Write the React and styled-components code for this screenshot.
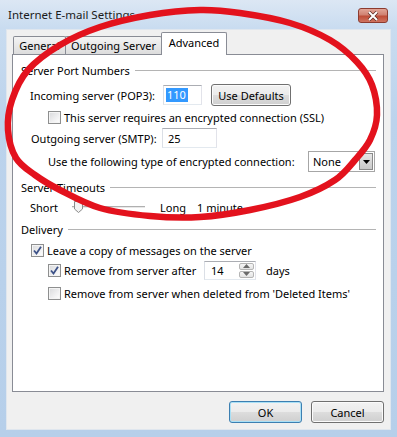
import React from "react";
import styled, { createGlobalStyle, css } from "styled-components";

const Global = createGlobalStyle`
  html, body { margin: 0; padding: 0; background: #b9d1ea; }
  body { font-family: "Noto Sans", "Open Sans", sans-serif; font-size: 11px; color: #000; }
`;

const Window = styled.div`
  position: relative;
  width: 397px;
  height: 437px;
  box-sizing: border-box;
  display: flex;
  flex-direction: column;
  padding: 0 6px 7px 6px;
  background: linear-gradient(to bottom, #dce7f4 0, #c9dcf0 28px, #bcd3ec 120px, #b6cfea 100%);
  overflow: hidden;
`;

const TitleBar = styled.div`
  height: 29px;
  display: flex;
  align-items: center;
  padding-left: 2px;
  font-size: 11.5px;
  color: #1a1a1a;
`;

const Close = styled.div`
  margin-left: auto;
  margin-right: 3px;
  margin-top: 2px;
  width: 30px;
  height: 15px;
  box-sizing: border-box;
  border: 1px solid #8c3b2f;
  border-radius: 3px;
  display: flex;
  align-items: center;
  justify-content: center;
  background: linear-gradient(to bottom, #e2a597 0, #d08272 45%, #bf4d38 55%, #cf7360 100%);
`;

const Client = styled.div`
  flex: 1;
  display: flex;
  flex-direction: column;
  background: #f0f0f0;
  padding: 3px 7px 7px 6px;
  box-shadow: inset 0 0 0 1px #dfe6ee;
`;

const TabStrip = styled.div`
  height: 22px;
  display: flex;
  align-items: flex-end;
  padding-left: 1px;
`;

const Tab = styled.div`
  box-sizing: border-box;
  width: ${p => p.$w}px;
  margin-left: -1px;
  border: 1px solid #898c95;
  border-bottom: none;
  border-radius: 2px 2px 0 0;
  display: flex;
  align-items: center;
  justify-content: center;
  ${p => p.$active ? css`
    height: 23px;
    margin-bottom: -1px;
    background: #fff;
    position: relative;
    z-index: 1;
    padding-bottom: 3px;
  ` : css`
    height: 18px;
    background: linear-gradient(to bottom, #f4f4f4, #e6e6e6 60%, #dcdcdc);
  `}
  &:first-child { margin-left: 0; }
`;

const Panel = styled.div`
  flex: 1;
  border: 1px solid #898c95;
  background: #fff;
  padding: 0 7px 0 8px;
  display: flex;
  flex-direction: column;
`;

const GroupHeader = styled.div`
  height: 16px;
  margin-top: ${p => p.$mt}px;
  display: flex;
  align-items: center;
  gap: 5px;
  white-space: nowrap;
  &::after {
    content: "";
    flex: 1;
    height: 1px;
    background: #b4b4b4;
  }
`;

const Row = styled.div`
  height: ${p => p.$h}px;
  margin-top: ${p => p.$mt}px;
  margin-left: ${p => p.$indent}px;
  display: flex;
  align-items: center;
  white-space: nowrap;
`;

const Label = styled.span`
  display: inline-block;
  width: ${p => (p.$w ? `${p.$w}px` : "auto")};
  margin-left: ${p => p.$ml || 0}px;
`;

const TextBox = styled.div`
  box-sizing: border-box;
  width: ${p => p.$w}px;
  height: ${p => p.$h}px;
  border: 1px solid;
  border-color: #abadb3 #e2e3ea #e3e9ef #dbdfe6;
  background: #fff;
  display: flex;
  align-items: center;
  padding-left: ${p => p.$pl}px;
  position: relative;
`;

const Selected = styled.span`
  background: #3399ff;
  color: #fff;
  padding: 0 2px 0 1px;
  line-height: 14px;
`;

const Button = styled.div`
  box-sizing: border-box;
  width: ${p => p.$w}px;
  height: ${p => p.$h || 22}px;
  margin-left: ${p => p.$ml || 0}px;
  border: 1px solid ${p => (p.$default ? "#3c7fb1" : "#707070")};
  border-radius: 3px;
  display: flex;
  align-items: center;
  justify-content: center;
  background: linear-gradient(to bottom, #f2f2f2 0, #ebebeb 50%, #dddddd 50%, #cfcfcf 100%);
  box-shadow: inset 0 0 0 1px ${p => (p.$default ? "#a9e0f6" : "#fbfbfb")};
`;

const Check = styled.span`
  box-sizing: border-box;
  width: 13px;
  height: 13px;
  flex: none;
  margin-right: 3px;
  border: 1px solid #8e8f8f;
  background: linear-gradient(135deg, #d8d9db 0, #f0f0f1 60%, #ffffff 100%);
  box-shadow: inset 0 0 0 1px #f4f4f4;
  display: flex;
  align-items: center;
  justify-content: center;
`;

const Combo = styled.div`
  margin-left: auto;
  margin-right: 1px;
  box-sizing: border-box;
  width: 67px;
  height: 21px;
  border: 1px solid #a6a6a6;
  background: #fff;
  display: flex;
  align-items: center;
  padding-left: 4px;
  justify-content: space-between;
`;

const ComboArrow = styled.div`
  box-sizing: border-box;
  width: 14px;
  height: 17px;
  margin-right: 1px;
  border: 1px solid #8a8a8a;
  background: linear-gradient(to bottom, #e6e6e6, #c9c9c9);
  display: flex;
  align-items: center;
  justify-content: center;
`;

const Spin = styled.div`
  position: absolute;
  right: 1px;
  top: 1px;
  bottom: 1px;
  width: 15px;
  display: flex;
  flex-direction: column;
  gap: 1px;
`;

const SpinBtn = styled.div`
  flex: 1;
  box-sizing: border-box;
  border: 1px solid #b5b5b5;
  border-radius: 2px;
  background: linear-gradient(to bottom, #f6f6f6, #e3e3e3);
  display: flex;
  align-items: center;
  justify-content: center;
`;

const Slider = styled.div`
  position: relative;
  width: 73px;
  height: 12px;
  &::before {
    content: "";
    position: absolute;
    left: 0;
    right: 0;
    top: 5px;
    height: 1px;
    background: #b0b0b0;
    border-bottom: 1px solid #e8e8e8;
  }
`;

const Thumb = styled.svg`
  position: absolute;
  left: 2px;
  top: 0;
`;

const Footer = styled.div`
  display: flex;
  justify-content: flex-end;
  gap: 9px;
  padding-top: 9px;
`;

const Overlay = styled.svg`
  position: absolute;
  left: 0;
  top: 0;
  pointer-events: none;
`;

const ring = [
  [200, 10], [240, 13], [290, 23], [330, 40], [357, 62], [372, 85], [377, 115],
  [370, 140], [355, 160], [335, 180], [300, 197], [250, 210], [200, 217],
  [150, 216], [100, 208], [60, 190], [35, 175], [16, 158], [8, 130], [12, 100],
  [28, 70], [60, 45], [100, 27], [150, 15],
];

const smoothPath = pts => {
  const n = pts.length;
  let d = `M${pts[0][0]},${pts[0][1]}`;
  for (let i = 0; i < n; i++) {
    const p0 = pts[(i - 1 + n) % n], p1 = pts[i], p2 = pts[(i + 1) % n], p3 = pts[(i + 2) % n];
    const c1 = [p1[0] + (p2[0] - p0[0]) / 6, p1[1] + (p2[1] - p0[1]) / 6];
    const c2 = [p2[0] - (p3[0] - p1[0]) / 6, p2[1] - (p3[1] - p1[1]) / 6];
    d += ` C${c1[0]},${c1[1]} ${c2[0]},${c2[1]} ${p2[0]},${p2[1]}`;
  }
  return d + "Z";
};

const Tick = () => (
  <svg width="9" height="9" viewBox="0 0 9 9">
    <path d="M1 4.5 L3.5 7.5 L8 0.8" fill="none" stroke="#3d5288" strokeWidth="1.8" />
  </svg>
);

const CheckBox = ({ checked }) => <Check>{checked && <Tick />}</Check>;

const App = () => (
  <Window>
    <Global />
    <TitleBar>
      Internet E-mail Settings
      <Close>
        <svg width="12" height="10" viewBox="0 0 12 10">
          <path d="M2 1 L10 9 M10 1 L2 9" stroke="#5a2a22" strokeWidth="3.4" />
          <path d="M2 1 L10 9 M10 1 L2 9" stroke="#fff" strokeWidth="2" />
        </svg>
      </Close>
    </TitleBar>
    <Client>
      <TabStrip>
        <Tab $w={53}>General</Tab>
        <Tab $w={97}>Outgoing Server</Tab>
        <Tab $w={66} $active>Advanced</Tab>
      </TabStrip>
      <Panel>
        <GroupHeader $mt={7}>Server Port Numbers</GroupHeader>
        <Row $h={22} $mt={6} $indent={9}>
          <Label $w={133}>Incoming server (POP3):</Label>
          <TextBox $w={39} $h={20} $pl={2}><Selected>110</Selected></TextBox>
          <Button $w={80} $ml={9}>Use Defaults</Button>
        </Row>
        <Row $h={16} $mt={3} $indent={27}>
          <CheckBox />
          This server requires an encrypted connection (SSL)
        </Row>
        <Row $h={20} $mt={3} $indent={10}>
          <Label $w={131}>Outgoing server (SMTP):</Label>
          <TextBox $w={55} $h={20} $pl={5}>25</TextBox>
        </Row>
        <Row $h={21} $mt={3} $indent={27}>
          <Label>Use the following type of encrypted connection:</Label>
          <Combo>
            None
            <ComboArrow>
              <svg width="7" height="4" viewBox="0 0 7 4"><path d="M0 0 H7 L3.5 4Z" fill="#000" /></svg>
            </ComboArrow>
          </Combo>
        </Row>
        <GroupHeader $mt={7}>Server Timeouts</GroupHeader>
        <Row $h={20} $mt={2} $indent={9}>
          <Label $w={42}>Short</Label>
          <Slider>
            <Thumb width="9" height="12" viewBox="0 0 9 12">
              <path d="M0.5 0.5 H8.5 V8 L4.5 11.5 L0.5 8Z" fill="#f2f2f2" stroke="#8a8a8a" />
            </Thumb>
          </Slider>
          <Label $ml={15}>Long</Label>
          <Label $ml={11}>1 minute</Label>
        </Row>
        <GroupHeader $mt={4}>Delivery</GroupHeader>
        <Row $h={16} $mt={5} $indent={10}>
          <CheckBox checked />
          Leave a copy of messages on the server
        </Row>
        <Row $h={20} $mt={2} $indent={27}>
          <CheckBox checked />
          <Label $w={140}>Remove from server after</Label>
          <TextBox $w={52} $h={19} $pl={6}>
            14
            <Spin>
              <SpinBtn>
                <svg width="7" height="4" viewBox="0 0 7 4"><path d="M0 4 H7 L3.5 0Z" fill="#6a6a6a" /></svg>
              </SpinBtn>
              <SpinBtn>
                <svg width="7" height="4" viewBox="0 0 7 4"><path d="M0 0 H7 L3.5 4Z" fill="#6a6a6a" /></svg>
              </SpinBtn>
            </Spin>
          </TextBox>
          <Label $ml={10}>days</Label>
        </Row>
        <Row $h={16} $mt={5} $indent={27}>
          <CheckBox />
          Remove from server when deleted from 'Deleted Items'
        </Row>
      </Panel>
      <Footer>
        <Button $w={73} $default>OK</Button>
        <Button $w={73}>Cancel</Button>
      </Footer>
    </Client>
    <Overlay width="397" height="437" viewBox="0 0 397 437">
      <path d={smoothPath(ring)} fill="none" stroke="#e3121d" strokeWidth="6.5" strokeLinejoin="round" />
    </Overlay>
  </Window>
);

export default App;
